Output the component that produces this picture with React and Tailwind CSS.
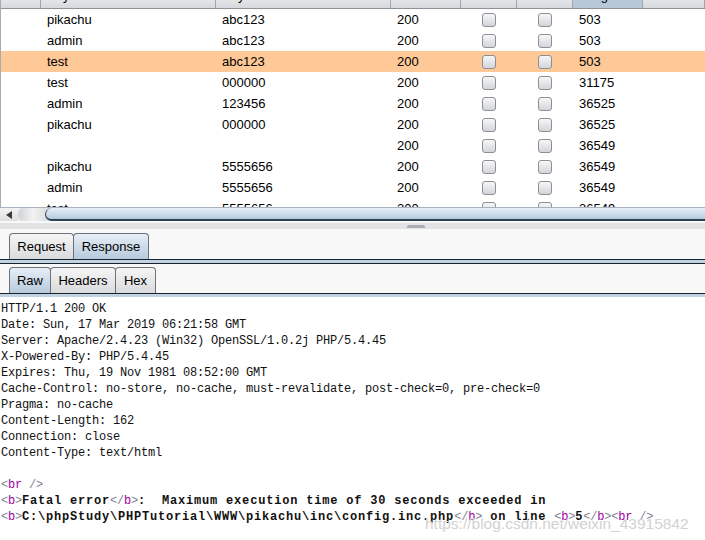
import React from "react";

const rows = [
  ["pikachu", "abc123", "200", "503"],
  ["admin", "abc123", "200", "503"],
  ["test", "abc123", "200", "503"],
  ["test", "000000", "200", "31175"],
  ["admin", "123456", "200", "36525"],
  ["pikachu", "000000", "200", "36525"],
  ["", "", "200", "36549"],
  ["pikachu", "5555656", "200", "36549"],
  ["admin", "5555656", "200", "36549"],
  ["test", "5555656", "200", "36549"],
];

const headers = [
  ["w-[40px]", ""],
  ["w-[175px]", "Payload1"],
  ["w-[175px]", "Payload2"],
  ["w-[70px]", "Status"],
  ["w-[56px]", "Error"],
  ["w-[56px]", "Timeout"],
  ["w-[70px]", "Length"],
  ["flex-1", "Comment"],
];

const headerLines = [
  "HTTP/1.1 200 OK",
  "Date: Sun, 17 Mar 2019 06:21:58 GMT",
  "Server: Apache/2.4.23 (Win32) OpenSSL/1.0.2j PHP/5.4.45",
  "X-Powered-By: PHP/5.4.45",
  "Expires: Thu, 19 Nov 1981 08:52:00 GMT",
  "Cache-Control: no-store, no-cache, must-revalidate, post-check=0, pre-check=0",
  "Pragma: no-cache",
  "Content-Length: 162",
  "Connection: close",
  "Content-Type: text/html",
];

function Box() {
  return (
    <div className="w-[14px] h-[14px] rounded-[3px] border border-[#8c8f94] bg-gradient-to-b from-[#f7f7f8] to-[#d3d5d9]" />
  );
}

function Tag({ name, close, self }) {
  return (
    <span className="font-normal tracking-[-0.2px]">
      <span className="text-[#7f7f8f]">{close ? "</" : "<"}</span>
      <span className="text-[#a400a4]">{name}</span>
      <span className="text-[#7f7f8f]">{self ? " />" : ">"}</span>
    </span>
  );
}

function Bold({ children }) {
  return <span className="font-bold tracking-[0.8px]">{children}</span>;
}

function Tab({ label, active, w }) {
  return (
    <div
      className={`${w} h-full flex items-center justify-center border border-b-0 border-[#6d7278] rounded-t-[4px] -ml-px first:ml-0 ${
        active
          ? "bg-gradient-to-b from-[#e6eef6] to-[#b6cadc]"
          : "bg-gradient-to-b from-[#f6f6f6] to-[#d9dadc]"
      }`}
    >
      {label}
    </div>
  );
}

export default function App() {
  return (
    <div className="w-[705px] h-[540px] overflow-hidden bg-white relative text-black font-['Liberation_Sans',Arial,sans-serif]">
      {/* results table */}
      <div className="h-[207px] flex flex-col border-l border-[#a8abb0] overflow-hidden">
        <div className="h-[9px] shrink-0 flex border-b border-[#8d9198] bg-gradient-to-b from-[#e3e5e8] to-[#d6d9dd] overflow-hidden text-[13px]">
          {headers.map(([w, t], i) => (
            <div
              key={i}
              className={`${w} h-full border-r border-[#a3a7ad] overflow-hidden ${
                t === "Length" ? "bg-[#b7c9d9]" : ""
              }`}
            >
              <div className="-mt-[12px] leading-[15px] pl-[6px]">{t}</div>
            </div>
          ))}
        </div>
        {rows.map((r, i) => (
          <div
            key={i}
            className={`h-[21px] shrink-0 flex items-center text-[13px] ${
              i === 2 ? "bg-[#ffc897]" : ""
            }`}
          >
            <div className="w-[40px]" />
            <div className="w-[175px] pl-[6px]">{r[0]}</div>
            <div className="w-[175px] pl-[6px]">{r[1]}</div>
            <div className="w-[70px] pl-[6px]">{r[2]}</div>
            <div className="w-[56px] flex justify-center">
              <Box />
            </div>
            <div className="w-[56px] flex justify-center">
              <Box />
            </div>
            <div className="w-[70px] pl-[6px]">{r[3]}</div>
          </div>
        ))}
      </div>

      {/* horizontal scrollbar */}
      <div className="h-[14px] flex border-t border-[#a9b3bd] bg-[#e9ebee]">
        <div className="w-[18px] h-full flex items-center justify-center bg-gradient-to-b from-[#f3f3f3] to-[#dedede]">
          <div className="w-0 h-0 border-y-[4px] border-y-transparent border-r-[6px] border-r-[#3a3a3a]" />
        </div>
        <div className="w-[30px] h-full bg-gradient-to-r from-[#cfd1d4] via-[#f2f2f2] to-[#dadcdf] rounded-l-[6px]" />
        <div className="flex-1 h-full -ml-[3px] rounded-l-[12px] border-l border-b-2 border-[#2f4252] bg-gradient-to-b from-[#e8f0f7] to-[#b3cbe0]" />
      </div>

      {/* splitter */}
      <div className="h-[9px] bg-[#f8f8f8] flex flex-col">
        <div className="h-[6px] mt-[2px] bg-[#e2e3e5] flex justify-center">
          <div className="w-[18px] h-[3px] mt-[2px] ml-[126px] rounded-t-[2px] bg-[#a9adb3]" />
        </div>
      </div>

      {/* request / response tabs */}
      <div className="bg-[#f8f8f8] pt-[3px]">
        <div className="h-[26px] flex pl-[9px] text-[13px]">
          <Tab label="Request" w="w-[65px]" />
          <Tab label="Response" w="w-[76px]" active />
        </div>
        <div className="h-[5px] border-y border-[#18222c] bg-[#c1d2e3]" />
      </div>

      {/* raw / headers / hex tabs */}
      <div className="bg-[#f8f8f8] pt-[3px]">
        <div className="h-[26px] flex pl-[9px] text-[13px]">
          <Tab label="Raw" w="w-[42px]" active />
          <Tab label="Headers" w="w-[66px]" />
          <Tab label="Hex" w="w-[41px]" />
        </div>
        <div className="h-[4px] border-t border-[#18222c] bg-[#c1d2e3]" />
      </div>

      {/* response body */}
      <div className="pt-[4px] pl-[1px] font-['Liberation_Mono','Courier_New',monospace] text-[12px] leading-[16px] tracking-[-0.2px] text-[#111] whitespace-pre">
        {headerLines.map((l, i) => (
          <div key={i}>{l}</div>
        ))}
        <div>&nbsp;</div>
        <div>
          <Tag name="br" self />
        </div>
        <div>
          <Tag name="b" />
          <Bold>Fatal error</Bold>
          <Tag name="b" close />
          <Bold>:  Maximum execution time of 30 seconds exceeded in</Bold>
        </div>
        <div>
          <Tag name="b" />
          <Bold>C:\phpStudy\PHPTutorial\WWW\pikachu\inc\config.inc.php</Bold>
          <Tag name="b" close />
          <Bold> on line </Bold>
          <Tag name="b" />
          <Bold>5</Bold>
          <Tag name="b" close />
          <Tag name="br" self />
        </div>
      </div>

      {/* watermark */}
      <div className="absolute left-[425px] top-[512px] text-[15.5px] text-[#d2d2d2] font-['Liberation_Sans',Arial,sans-serif]">
        https://blog.csdn.net/weixin_43915842
      </div>
    </div>
  );
}
